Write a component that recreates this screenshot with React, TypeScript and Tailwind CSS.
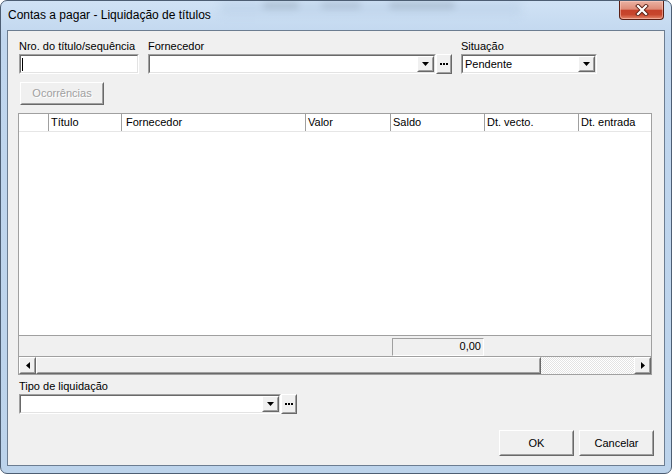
import React from "react";

const Raised = ({ className = "", children }: { className?: string; children?: React.ReactNode }) => (
  <div className={`border border-t-white border-l-white border-b-[#696969] border-r-[#696969] bg-[#f0f0f0] ${className}`}>
    <div className="w-full h-full border border-t-[#f0f0f0] border-l-[#f0f0f0] border-b-[#a0a0a0] border-r-[#a0a0a0] flex items-center justify-center">
      {children}
    </div>
  </div>
);

const Sunken = ({ className = "", children }: { className?: string; children?: React.ReactNode }) => (
  <div className={`border border-t-[#a0a0a0] border-l-[#a0a0a0] border-b-white border-r-white ${className}`}>
    <div className="w-full h-full border border-t-[#696969] border-l-[#696969] border-b-[#e3e3e3] border-r-[#e3e3e3] bg-white flex items-stretch">
      {children}
    </div>
  </div>
);

const Down = () => (
  <svg width="7" height="4" viewBox="0 0 7 4" className="block">
    <path d="M0 0H7L3.5 4Z" fill="#000" />
  </svg>
);

const Dots = () => (
  <svg width="8" height="2" viewBox="0 0 8 2" className="block">
    <rect x="0" y="0" width="2" height="2" fill="#000" />
    <rect x="3" y="0" width="2" height="2" fill="#000" />
    <rect x="6" y="0" width="2" height="2" fill="#000" />
  </svg>
);

const Label = ({ children }: { children: React.ReactNode }) => (
  <div className="h-[13px] leading-[13px] text-[11px] mb-[1px] whitespace-nowrap">{children}</div>
);

export default function App() {
  return (
    <div className="w-[672px] h-[474px] relative overflow-hidden rounded-[7px] border border-[#4d5e73] bg-[linear-gradient(to_bottom,#d0e2f5_0%,#c0d6ee_8%,#bcd3eb_100%)] flex flex-col font-['Liberation_Sans',Arial,sans-serif] text-black">
      {/* blurred background behind glass */}
      <div className="absolute left-[262px] top-[1px] w-[36px] h-[7px] rounded-full bg-[#707c8a] opacity-30 blur-[3px]" />
      <div className="absolute left-[320px] top-[1px] w-[40px] h-[7px] rounded-full bg-[#707c8a] opacity-25 blur-[3px]" />
      <div className="absolute left-[388px] top-[1px] w-[66px] h-[7px] rounded-full bg-[#707c8a] opacity-30 blur-[3px]" />
      <div className="absolute left-[220px] top-[0px] w-[300px] h-[14px] bg-[#aac2dc] opacity-30 blur-[4px]" />

      {/* title bar */}
      <div className="h-[29px] shrink-0 pl-[7px] leading-[29px] text-[12px] text-black whitespace-nowrap relative">
        Contas a pagar - Liquidação de títulos
      </div>

      {/* close button */}
      <div className="absolute right-[7px] top-0 w-[45px] h-[19px] rounded-b-[4px] border border-t-0 border-[#5a1f14] bg-[linear-gradient(to_bottom,#eab2a3_0%,#de8b77_45%,#c5412a_52%,#c7462d_75%,#e4866a_100%)] flex items-center justify-center shadow-[inset_0_0_0_1px_rgba(255,210,200,0.5)]">
        <svg width="14" height="12" viewBox="0 0 14 12">
          <path d="M3 2L11 10M11 2L3 10" stroke="#5a2217" strokeWidth="4" strokeLinecap="square" />
          <path d="M3 2L11 10M11 2L3 10" stroke="#ffffff" strokeWidth="2.2" strokeLinecap="square" />
        </svg>
      </div>

      {/* client area */}
      <div className="ml-[6px] mr-[6px] mb-[7px] flex-1 border border-[#6c7d91] bg-[#f0f0f0] flex flex-col pl-[11px] pt-[9px] relative">
        {/* top fields */}
        <div className="flex gap-[9px]">
          <div className="w-[120px]">
            <Label>Nro. do título/sequência</Label>
            <Sunken className="h-[20px] w-[120px]">
              <div className="ml-[1px] mt-[2px] w-[1px] h-[13px] bg-black" />
            </Sunken>
          </div>
          <div className="w-[304px]">
            <Label>Fornecedor</Label>
            <div className="flex h-[20px]">
              <Sunken className="h-[20px] flex-1">
                <div className="flex-1" />
                <Raised className="w-[17px] h-full">
                  <Down />
                </Raised>
              </Sunken>
              <Raised className="w-[16px] h-[20px]">
                <Dots />
              </Raised>
            </div>
          </div>
          <div className="w-[136px]">
            <Label>Situação</Label>
            <Sunken className="h-[20px] w-[136px]">
              <div className="flex-1 pl-[2px] text-[11px] leading-[16px]">Pendente</div>
              <Raised className="w-[17px] h-full">
                <Down />
              </Raised>
            </Sunken>
          </div>
        </div>

        {/* Ocorrências */}
        <Raised className="mt-[8px] ml-[1px] w-[84px] h-[23px]">
          <span className="text-[11px] text-[#a0a0a0] [text-shadow:1px_1px_0_#ffffff]">Ocorrências</span>
        </Raised>

        {/* grid */}
        <div className="mt-[8px] ml-[-1px] w-[634px] border border-[#a0a0a0] bg-white flex flex-col">
          <div className="h-[18px] flex text-[11px] leading-[17px] bg-white border-b border-[#e6e6e6]">
            <div className="w-[30px] border-r border-[#a0a0a0]" />
            <div className="w-[73px] border-r border-[#a0a0a0] pl-[2px]">Título</div>
            <div className="w-[184px] border-r border-[#a0a0a0] pl-[4px]">Fornecedor</div>
            <div className="w-[85px] border-r border-[#a0a0a0] pl-[2px]">Valor</div>
            <div className="w-[94px] border-r border-[#a0a0a0] pl-[2px]">Saldo</div>
            <div className="w-[94px] border-r border-[#a0a0a0] pl-[2px]">Dt. vecto.</div>
            <div className="flex-1 pl-[2px] whitespace-nowrap overflow-hidden">Dt. entrada</div>
          </div>
          <div className="h-[203px] bg-white" />
          <div className="h-[22px] border-t border-b border-[#a0a0a0] bg-[#f0f0f0] pt-[2px] pl-[373px]">
            <div className="w-[92px] h-[18px] border border-t-[#a0a0a0] border-l-[#a0a0a0] border-b-white border-r-white text-right pr-[2px] text-[11px] leading-[15px]">
              0,00
            </div>
          </div>
          <div className="h-[17px] flex">
            <Raised className="w-[17px] h-[17px]">
              <svg width="4" height="7" viewBox="0 0 4 7" className="block">
                <path d="M4 0V7L0 3.5Z" fill="#000" />
              </svg>
            </Raised>
            <Raised className="w-[505px] h-[17px]" />
            <div className="w-[93px] h-[17px] bg-[repeating-conic-gradient(#ffffff_0%_25%,#e3e3e3_0%_50%)] bg-[length:2px_2px]" />
            <Raised className="w-[17px] h-[17px]">
              <svg width="4" height="7" viewBox="0 0 4 7" className="block">
                <path d="M0 0V7L4 3.5Z" fill="#000" />
              </svg>
            </Raised>
          </div>
        </div>

        {/* Tipo de liquidação */}
        <div className="mt-[5px] w-[278px]">
          <Label>Tipo de liquidação</Label>
          <div className="flex h-[20px]">
            <Sunken className="h-[20px] flex-1">
              <div className="flex-1" />
              <Raised className="w-[17px] h-full">
                <Down />
              </Raised>
            </Sunken>
            <Raised className="w-[16px] h-[20px]">
              <Dots />
            </Raised>
          </div>
        </div>

        {/* buttons */}
        <div className="mt-[16px] mr-[10px] flex justify-end gap-[5px]">
          <Raised className="w-[75px] h-[26px]">
            <span className="text-[11px]">OK</span>
          </Raised>
          <Raised className="w-[75px] h-[26px]">
            <span className="text-[11px]">Cancelar</span>
          </Raised>
        </div>
      </div>
    </div>
  );
}
